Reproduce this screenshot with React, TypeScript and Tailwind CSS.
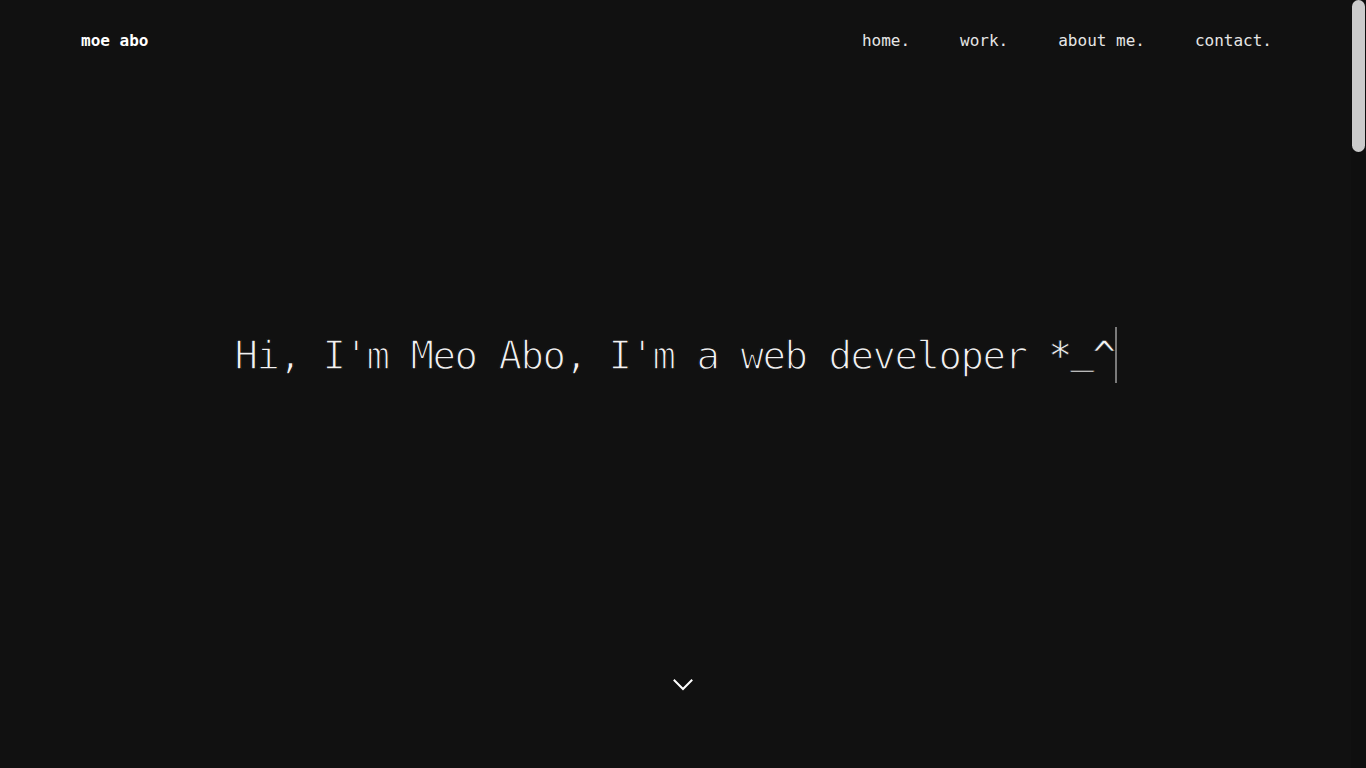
import React from "react";

const mono = "font-['DejaVu_Sans_Mono','Liberation_Mono',monospace]";

export default function App() {
  return (
    <div className={`flex h-screen w-full overflow-hidden bg-[#111111] text-[#e8e8e8] ${mono}`}>
      <div className="h-full min-w-0 flex-1 overflow-y-auto [scrollbar-width:none]">
        <section id="home" className="flex h-[768px] flex-col">
          <header className="flex h-20 items-center justify-between pt-0.5 pl-[81px] pr-[79px] text-base">
            <a href="#home" className="font-bold text-white">
              moe abo
            </a>
            <nav className="flex items-center gap-[50px] text-[#e6e6e6]">
              <a href="#home">home.</a>
              <a href="#work">work.</a>
              <a href="#about">about me.</a>
              <a href="#contact">contact.</a>
            </nav>
          </header>

          <div className="mt-[247px] flex justify-center">
            <h1 className="h-14 border-r-2 border-[#7a7a7a] pt-px text-[39px] leading-[56px] font-normal tracking-[-1.48px] whitespace-pre text-[#f2f2f2] [-webkit-text-stroke:1.3px_#111111]">
              Hi, I'm Meo Abo, I'm a web developer{" "}
              <span className="[-webkit-text-stroke:0.6px_#111111]">
                *<span className="inline-block -translate-y-[6px]">_</span>^
              </span>
            </h1>
          </div>

          <div className="mt-[296px] flex justify-center">
            <a href="#work" className="ml-[15px] block" aria-label="scroll down">
              <svg width="20" height="12" viewBox="0 0 20 12" fill="none">
                <polyline
                  points="1.5,1.5 10,10 18.5,1.5"
                  stroke="#ffffff"
                  strokeWidth="2"
                  strokeLinecap="square"
                />
              </svg>
            </a>
          </div>
        </section>

        <section id="work" className="h-[1040px]" />
        <section id="about" className="h-[1040px]" />
        <section id="contact" className="h-[1032px]" />
      </div>

      <aside className="flex w-[15px] shrink-0 flex-col bg-[#0f0f0f]" aria-hidden="true">
        <div className="mx-px h-[152px] rounded-full bg-[#cbcbcb]" />
      </aside>
    </div>
  );
}
